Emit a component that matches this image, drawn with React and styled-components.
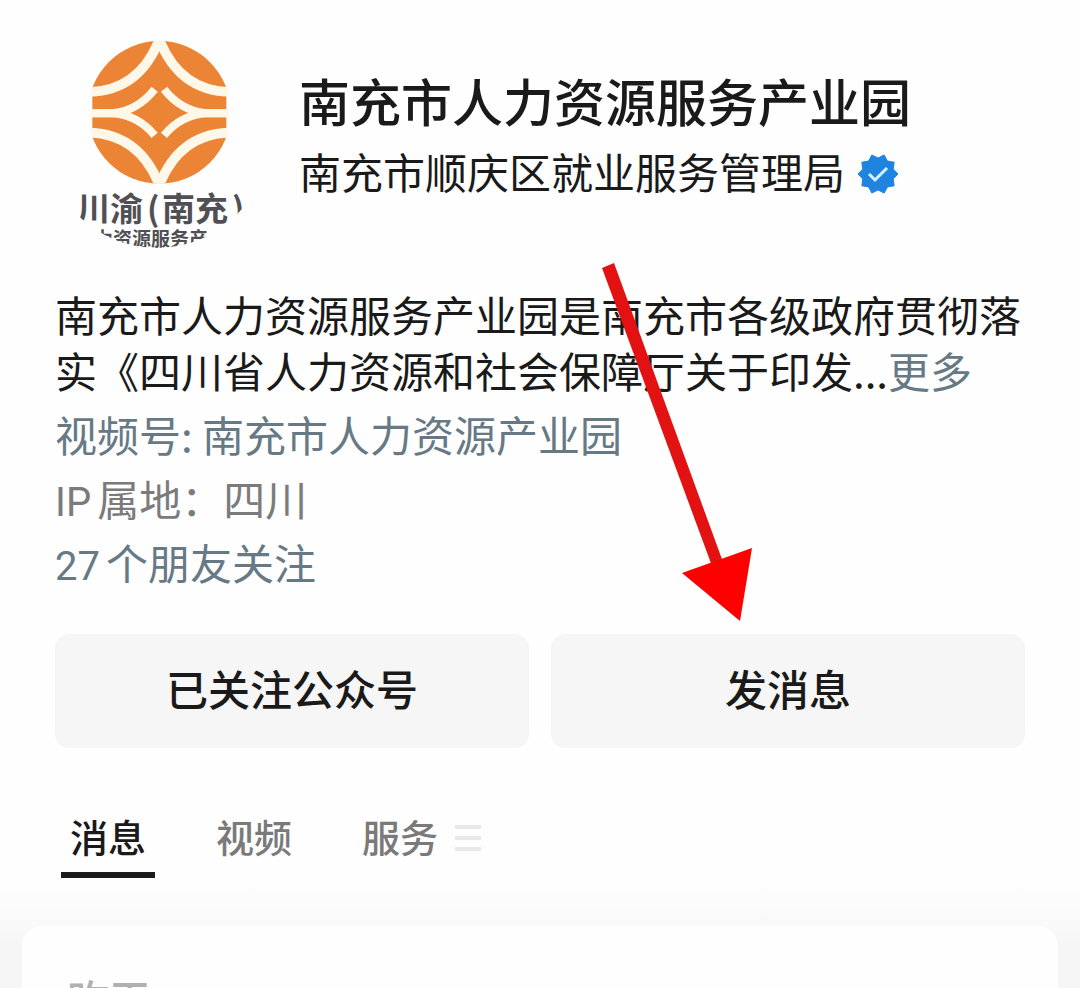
import React from "react";
import styled, { createGlobalStyle } from "styled-components";

const GlobalStyle = createGlobalStyle`
  *, *::before, *::after { box-sizing: border-box; }
  html { scrollbar-width: none; }
  body {
    margin: 0;
    background: #fefefe;
    color: #1a1a1a;
    font-family: "Noto Sans CJK SC", sans-serif;
  }
  h1, p { margin: 0; }
`;

const Page = styled.main`
  position: relative;
  min-height: 100vh;
  display: flex;
  flex-direction: column;
`;

const Profile = styled.section`
  padding: 24px 55px 0;
`;

const Header = styled.header`
  display: flex;
  align-items: flex-start;
  gap: 34px;
`;

const Logo = styled.svg`
  flex: none;
  width: 210px;
  height: 224px;
`;

const Names = styled.div`
  flex: 1;
  padding-top: 40px;
`;

const Title = styled.h1`
  font-size: 51px;
  line-height: 72px;
  font-weight: 500;
`;

const Owner = styled.p`
  display: flex;
  align-items: center;
  gap: 12px;
  font-size: 42px;
  line-height: 70px;
`;

const Badge = styled.svg`
  flex: none;
  width: 42px;
  height: 42px;
  margin-top: 6px;
`;

const Intro = styled.p`
  margin-top: 38px;
  font-size: 42px;
  line-height: 56px;
`;

const TextLink = styled.a`
  color: #667985;
  text-decoration: none;
`;

const Facts = styled.div`
  margin-top: 4px;
`;

const Fact = styled.p`
  font-size: 42px;
  line-height: 64px;
  color: ${(p) => (p.$muted ? "#7b7b7b" : "#667985")};
`;

const Latin = styled.span`
  margin-right: 6px;
  font-family: Roboto, sans-serif;
  font-size: 40px;
  line-height: 1;
`;

const Actions = styled.div`
  display: flex;
  gap: 22px;
  margin-top: 40px;
`;

const ActionButton = styled.button`
  flex: 1;
  height: 114px;
  padding: 0 0 8px;
  border: 0;
  border-radius: 14px;
  background: #f6f6f6;
  color: #1a1a1a;
  font-family: inherit;
  font-size: 42px;
  font-weight: 500;
`;

const Tabs = styled.nav`
  display: flex;
  align-items: flex-start;
  gap: 52px;
  height: 178px;
  padding: 60px 61px 0;
  background: linear-gradient(#fefefe 130px, #f9f9f9);
`;

const Tab = styled.button`
  height: 70px;
  padding: 0 9px 8px;
  border: 0;
  border-bottom: 6px solid ${(p) => (p.$active ? "#1a1a1a" : "transparent")};
  background: none;
  color: ${(p) => (p.$active ? "#1a1a1a" : "#7a7a7a")};
  font-family: inherit;
  font-size: 38px;
  line-height: 56px;
  font-weight: 500;
`;

const TabGroup = styled.div`
  display: flex;
  align-items: flex-start;
  gap: 8px;
`;

const MenuIcon = styled.svg`
  width: 26px;
  height: 28px;
  margin-top: 16px;
`;

const Feed = styled.section`
  flex: 1;
  padding: 0 22px;
  background: linear-gradient(#f9f9f9, #f5f5f5 20px);
`;

const Card = styled.article`
  min-height: 100%;
  padding: 40px 45px;
  border-radius: 20px 20px 0 0;
  background: #fefefe;
  color: #b0b0b0;
  font-size: 42px;
  line-height: 64px;
  font-weight: 500;
`;

const Pointer = styled.svg`
  position: absolute;
  top: 260px;
  left: 600px;
  width: 156px;
  height: 364px;
  pointer-events: none;
`;

function OrgLogo() {
  return (
    <Logo viewBox="55 24 210 224" role="img" aria-label="川渝(南充)人力资源服务产业园">
      <defs>
        <clipPath id="avatar">
          <circle cx="157" cy="136" r="112" />
        </clipPath>
        <clipPath id="disc">
          <circle cx="298" cy="277" r="214" />
        </clipPath>
      </defs>
      <g clipPath="url(#avatar)">
        <g transform="translate(60 20) scale(0.33333)">
          <g clipPath="url(#disc)">
            <rect x="97" y="60" width="402" height="434" fill="#ec8436" />
            <g fill="none" stroke="#fff8e8" strokeWidth="29">
              <path d="M299 56 Q240 210 90 216" />
              <path d="M297 56 Q356 210 506 216" />
              <path d="M299 498 Q240 344 90 338" />
              <path d="M297 498 Q356 344 506 338" />
            </g>
            <g fill="none" stroke="#fff8e8" strokeWidth="24">
              <path d="M90 280 H155 Q232 274 284 208" />
              <path d="M90 280 H155 Q232 284 284 346" />
              <path d="M506 280 H441 Q364 274 312 208" />
              <path d="M506 280 H441 Q364 284 312 346" />
            </g>
          </g>
        </g>
        <g fill="#505054" fontFamily="'Noto Sans CJK SC', sans-serif" fontWeight="700">
          <g fontSize="33">
            <text x="77" y="221">川渝</text>
            <text x="147" y="221">(</text>
            <text x="162" y="221">南充</text>
            <text x="232" y="221">)</text>
          </g>
          <text x="75" y="246" fontSize="19">
            人力资源服务产
          </text>
        </g>
      </g>
    </Logo>
  );
}

const badgePoints = Array.from({ length: 20 }, (_, i) => {
  const r = i % 2 ? 16 : 20;
  const a = ((i * 18 - 90 + 18) * Math.PI) / 180;
  return `${(21 + r * Math.cos(a)).toFixed(2)},${(21 + r * Math.sin(a)).toFixed(2)}`;
}).join(" ");

function VerifiedBadge() {
  return (
    <Badge viewBox="0 0 42 42" role="img" aria-label="已认证">
      <polygon points={badgePoints} fill="#1e84e0" stroke="#1e84e0" strokeLinejoin="round" />
      <path d="M12 21 L18 27 L30 15" fill="none" stroke="#d9f1ff" strokeWidth="3" />
    </Badge>
  );
}

export default function App() {
  return (
    <>
      <GlobalStyle />
      <Page>
        <Profile>
          <Header>
            <OrgLogo />
            <Names>
              <Title>南充市人力资源服务产业园</Title>
              <Owner>
                南充市顺庆区就业服务管理局
                <VerifiedBadge />
              </Owner>
            </Names>
          </Header>
          <Intro>
            南充市人力资源服务产业园是南充市各级政府贯彻落实《四川省人力资源和社会保障厅关于印发...
            <TextLink href="#more">更多</TextLink>
          </Intro>
          <Facts>
            <Fact>
              视频号: <TextLink href="#channel">南充市人力资源产业园</TextLink>
            </Fact>
            <Fact $muted>
              <Latin>IP</Latin>属地：四川
            </Fact>
            <Fact>
              <Latin>27</Latin>个朋友关注
            </Fact>
          </Facts>
          <Actions>
            <ActionButton type="button">已关注公众号</ActionButton>
            <ActionButton type="button">发消息</ActionButton>
          </Actions>
        </Profile>
        <Tabs>
          <Tab type="button" $active>消息</Tab>
          <Tab type="button">视频</Tab>
          <TabGroup>
            <Tab type="button">服务</Tab>
            <MenuIcon viewBox="0 0 26 28" aria-hidden="true">
              <path d="M0 3 H26 M0 14 H26 M0 25 H26" stroke="#e9e9e9" strokeWidth="4" />
            </MenuIcon>
          </TabGroup>
        </Tabs>
        <Feed>
          <Card>昨天</Card>
        </Feed>
        <Pointer viewBox="600 260 156 364" aria-hidden="true">
          <polygon points="602,268 614,263 723,562 712,566" fill="#e31212" />
          <polygon points="682,573 752,548 740,621" fill="#ff0000" />
        </Pointer>
      </Page>
    </>
  );
}
